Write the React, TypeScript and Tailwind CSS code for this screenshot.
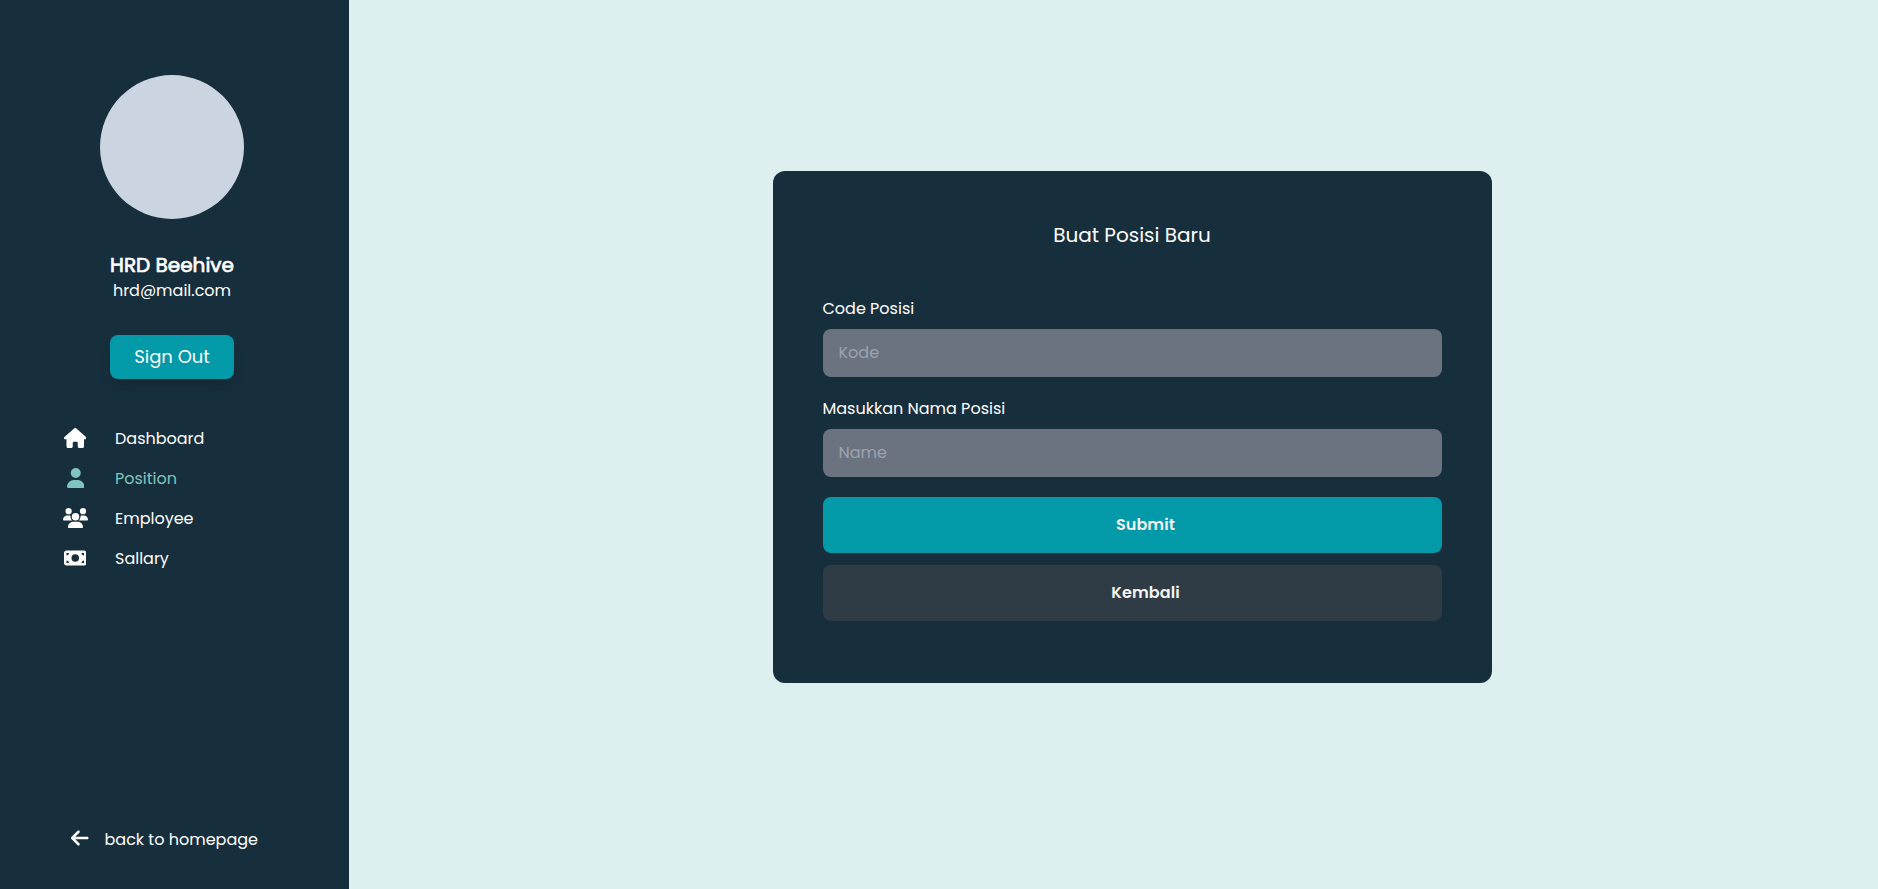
import type { ReactNode } from "react";
import {
  FaArrowLeft,
  FaHouse,
  FaMoneyBill,
  FaUser,
  FaUsers,
} from "react-icons/fa6";

type NavItem = { label: string; icon: ReactNode; active?: boolean };

const navItems: NavItem[] = [
  { label: "Dashboard", icon: <FaHouse className="h-5 w-[22.5px]" /> },
  { label: "Position", icon: <FaUser className="ml-px h-5 w-[17.5px]" />, active: true },
  { label: "Employee", icon: <FaUsers className="h-5 w-[25px]" /> },
  { label: "Sallary", icon: <FaMoneyBill className="h-5 w-[22.5px]" /> },
];

function Sidebar() {
  return (
    <aside className="flex w-[349px] shrink-0 flex-col bg-[#172e3c] pt-[75px] pr-[5px] pb-[37px]">
      <div className="flex flex-col items-center">
        <div className="size-36 rounded-full bg-[#cbd5e1]" />
        <h1 className="mt-8 text-xl font-normal [-webkit-text-stroke:0.7px_white]">HRD Beehive</h1>
        <p>hrd@mail.com</p>
        <button className="mt-8 rounded-lg bg-[#0299a9] px-6 py-2 text-lg shadow-lg">Sign Out</button>
      </div>
      <nav className="mt-12 flex flex-col gap-4 pl-[62px]">
        {navItems.map((item) => (
          <a
            key={item.label}
            className={item.active ? "flex items-center text-[#7fc4be]" : "flex items-center"}
          >
            <span className="mr-[27px] flex h-[22px] w-[26px] items-start justify-center">{item.icon}</span>
            {item.label}
          </a>
        ))}
      </nav>
      <a className="mt-auto flex items-center gap-4 pl-[71px]">
        <FaArrowLeft className="mb-1 h-5 w-[17.5px]" />
        back to homepage
      </a>
    </aside>
  );
}

function Field({ label, placeholder }: { label: string; placeholder: string }) {
  return (
    <label className="mb-5 flex flex-col gap-2">
      {label}
      <input
        className="h-12 rounded-lg bg-[#6b7280] px-4 pb-0.5 placeholder:text-[#9ca3af]"
        placeholder={placeholder}
      />
    </label>
  );
}

export default function App() {
  return (
    <div className="flex h-[889px] bg-[#ddefee] font-[Poppins,Inter,sans-serif] text-base text-white">
      <Sidebar />
      <main className="flex flex-1 justify-center pt-[171px] pl-[37px]">
        <section className="flex h-[512px] w-[719px] flex-col rounded-xl bg-[#172e3c] p-[50px]">
          <h2 className="mb-12 text-center text-xl">Buat Posisi Baru</h2>
          <Field label="Code Posisi" placeholder="Kode" />
          <Field label="Masukkan Nama Posisi" placeholder="Name" />
          <button className="h-14 rounded-lg bg-[#0299a9] pl-[27px] font-semibold tracking-[0.1px] text-gray-100">
            Submit
          </button>
          <button className="mt-3 h-14 rounded-lg bg-[#303c45] pl-[27px] font-semibold tracking-[0.1px] text-gray-100">
            Kembali
          </button>
        </section>
      </main>
    </div>
  );
}
